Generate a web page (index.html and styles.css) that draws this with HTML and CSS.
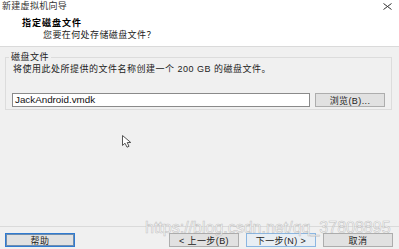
FILE: index.html
```html
<!DOCTYPE html>
<html lang="zh-CN">
<head>
<meta charset="utf-8">
<title>新建虚拟机向导</title>
<link rel="stylesheet" href="styles.css">
</head>
<body>
<div class="window">
  <div class="titlebar">
    <span class="title">新建虚拟机向导</span>
    <svg class="close" width="9" height="7" viewBox="0 0 9 7"><path d="M0.5 0.5 L8.5 6.5 M8.5 0.5 L0.5 6.5" stroke="#333" stroke-width="1" fill="none"/></svg>
  </div>
  <div class="header">
    <div class="h-title">指定磁盘文件</div>
    <div class="h-sub">您要在何处存储磁盘文件？</div>
  </div>
  <div class="content">
    <fieldset class="group">
      <legend>磁盘文件</legend>
      <div class="desc">将使用此处所提供的文件名称创建一个 200 GB 的磁盘文件。</div>
      <div class="file-row">
        <div class="input">JackAndroid.vmdk</div>
        <div class="btn">浏览(B)...</div>
      </div>
    </fieldset>
  </div>
  <div class="footer">
    <div class="btn focused">帮助</div>
    <div class="actions">
      <div class="btn">&lt; 上一步(B)</div>
      <div class="btn default">下一步(N) &gt;</div>
      <div class="btn">取消</div>
    </div>
  </div>
  <svg class="cursor" width="11" height="13" viewBox="0 0 11 13"><path d="M0.5 0.5 L0.5 10.5 L3 8.2 L5 12.2 L7 11.3 L5.2 7.5 L8.8 7.5 Z" fill="#fff" stroke="#555" stroke-width="1"/></svg>
  <div class="watermark">https://blog.csdn.net/qq_37808895</div>
</div>
</body>
</html>
```
FILE: styles.css
```css
* { box-sizing: border-box; }
html, body { margin: 0; padding: 0; }
body {
  width: 399px;
  height: 249px;
  overflow: hidden;
  font-family: "Liberation Sans", "Noto Sans CJK SC", sans-serif;
  font-size: 9px;
  color: #1a1a1a;
}
.window {
  position: relative;
  width: 399px;
  height: 249px;
  background: #f0f0f0;
  display: flex;
  flex-direction: column;
}
.titlebar {
  height: 12px;
  background: #fff;
  display: flex;
  align-items: center;
  justify-content: space-between;
  padding: 0 7px 0 2px;
  line-height: 12px;
  color: #333;
  letter-spacing: 0.3px;
}
.close { margin-top: 1px; }
.header {
  height: 35px;
  background: #fff;
  border-bottom: 1px solid #dadada;
  padding-top: 5px;
}
.h-title {
  padding-left: 22px;
  line-height: 12px;
  font-weight: bold;
  letter-spacing: 1px;
  color: #000;
}
.h-sub {
  padding-left: 43px;
  line-height: 12px;
  letter-spacing: 0.4px;
  color: #222;
}
.content {
  padding-top: 4px;
}
.group {
  margin: 0 7px 0 5px;
  padding: 0 6px 2px 7px;
  border: 1px solid #dcdcdc;
  min-width: 0;
}
.group legend {
  padding: 0 2px;
  margin-left: -4px;
  line-height: 12px;
  letter-spacing: 0.5px;
  color: #222;
}
.desc {
  line-height: 12px;
  letter-spacing: 0.5px;
  color: #222;
}
.file-row {
  display: flex;
  gap: 5px;
  margin-top: 18px;
  margin-left: -1px;
}
.input {
  width: 298px;
  height: 14px;
  background: #fff;
  border: 1px solid #8a8a8a;
  font-size: 9.8px;
  line-height: 12px;
  padding-left: 2px;
  color: #111;
}
.btn {
  width: 70px;
  height: 14px;
  background: #e1e1e1;
  border: 1px solid #adadad;
  display: flex;
  align-items: center;
  justify-content: center;
  letter-spacing: 0.4px;
  color: #222;
}
.footer {
  margin-top: auto;
  height: 23px;
  border-top: 1px solid #dadada;
  padding: 6px 6px 0 5px;
  display: flex;
  justify-content: space-between;
  align-items: flex-start;
}
.actions {
  display: flex;
  gap: 7px;
}
.btn.focused {
  border: 1px solid #2f7ad0;
  box-shadow: inset 0 0 0 1px #6d8db0;
}
.btn.default {
  background: #e8eef4;
  border: 1px solid #8ab6e2;
}
.cursor {
  position: absolute;
  left: 122px;
  top: 135px;
}
.watermark {
  position: absolute;
  left: 145px;
  top: 220px;
  font-family: "Liberation Sans", sans-serif;
  font-size: 16px;
  line-height: 16px;
  color: rgba(255, 255, 255, 0.85);
  -webkit-text-stroke: 0.6px rgba(160, 160, 160, 0.6);
  white-space: nowrap;
}
```
